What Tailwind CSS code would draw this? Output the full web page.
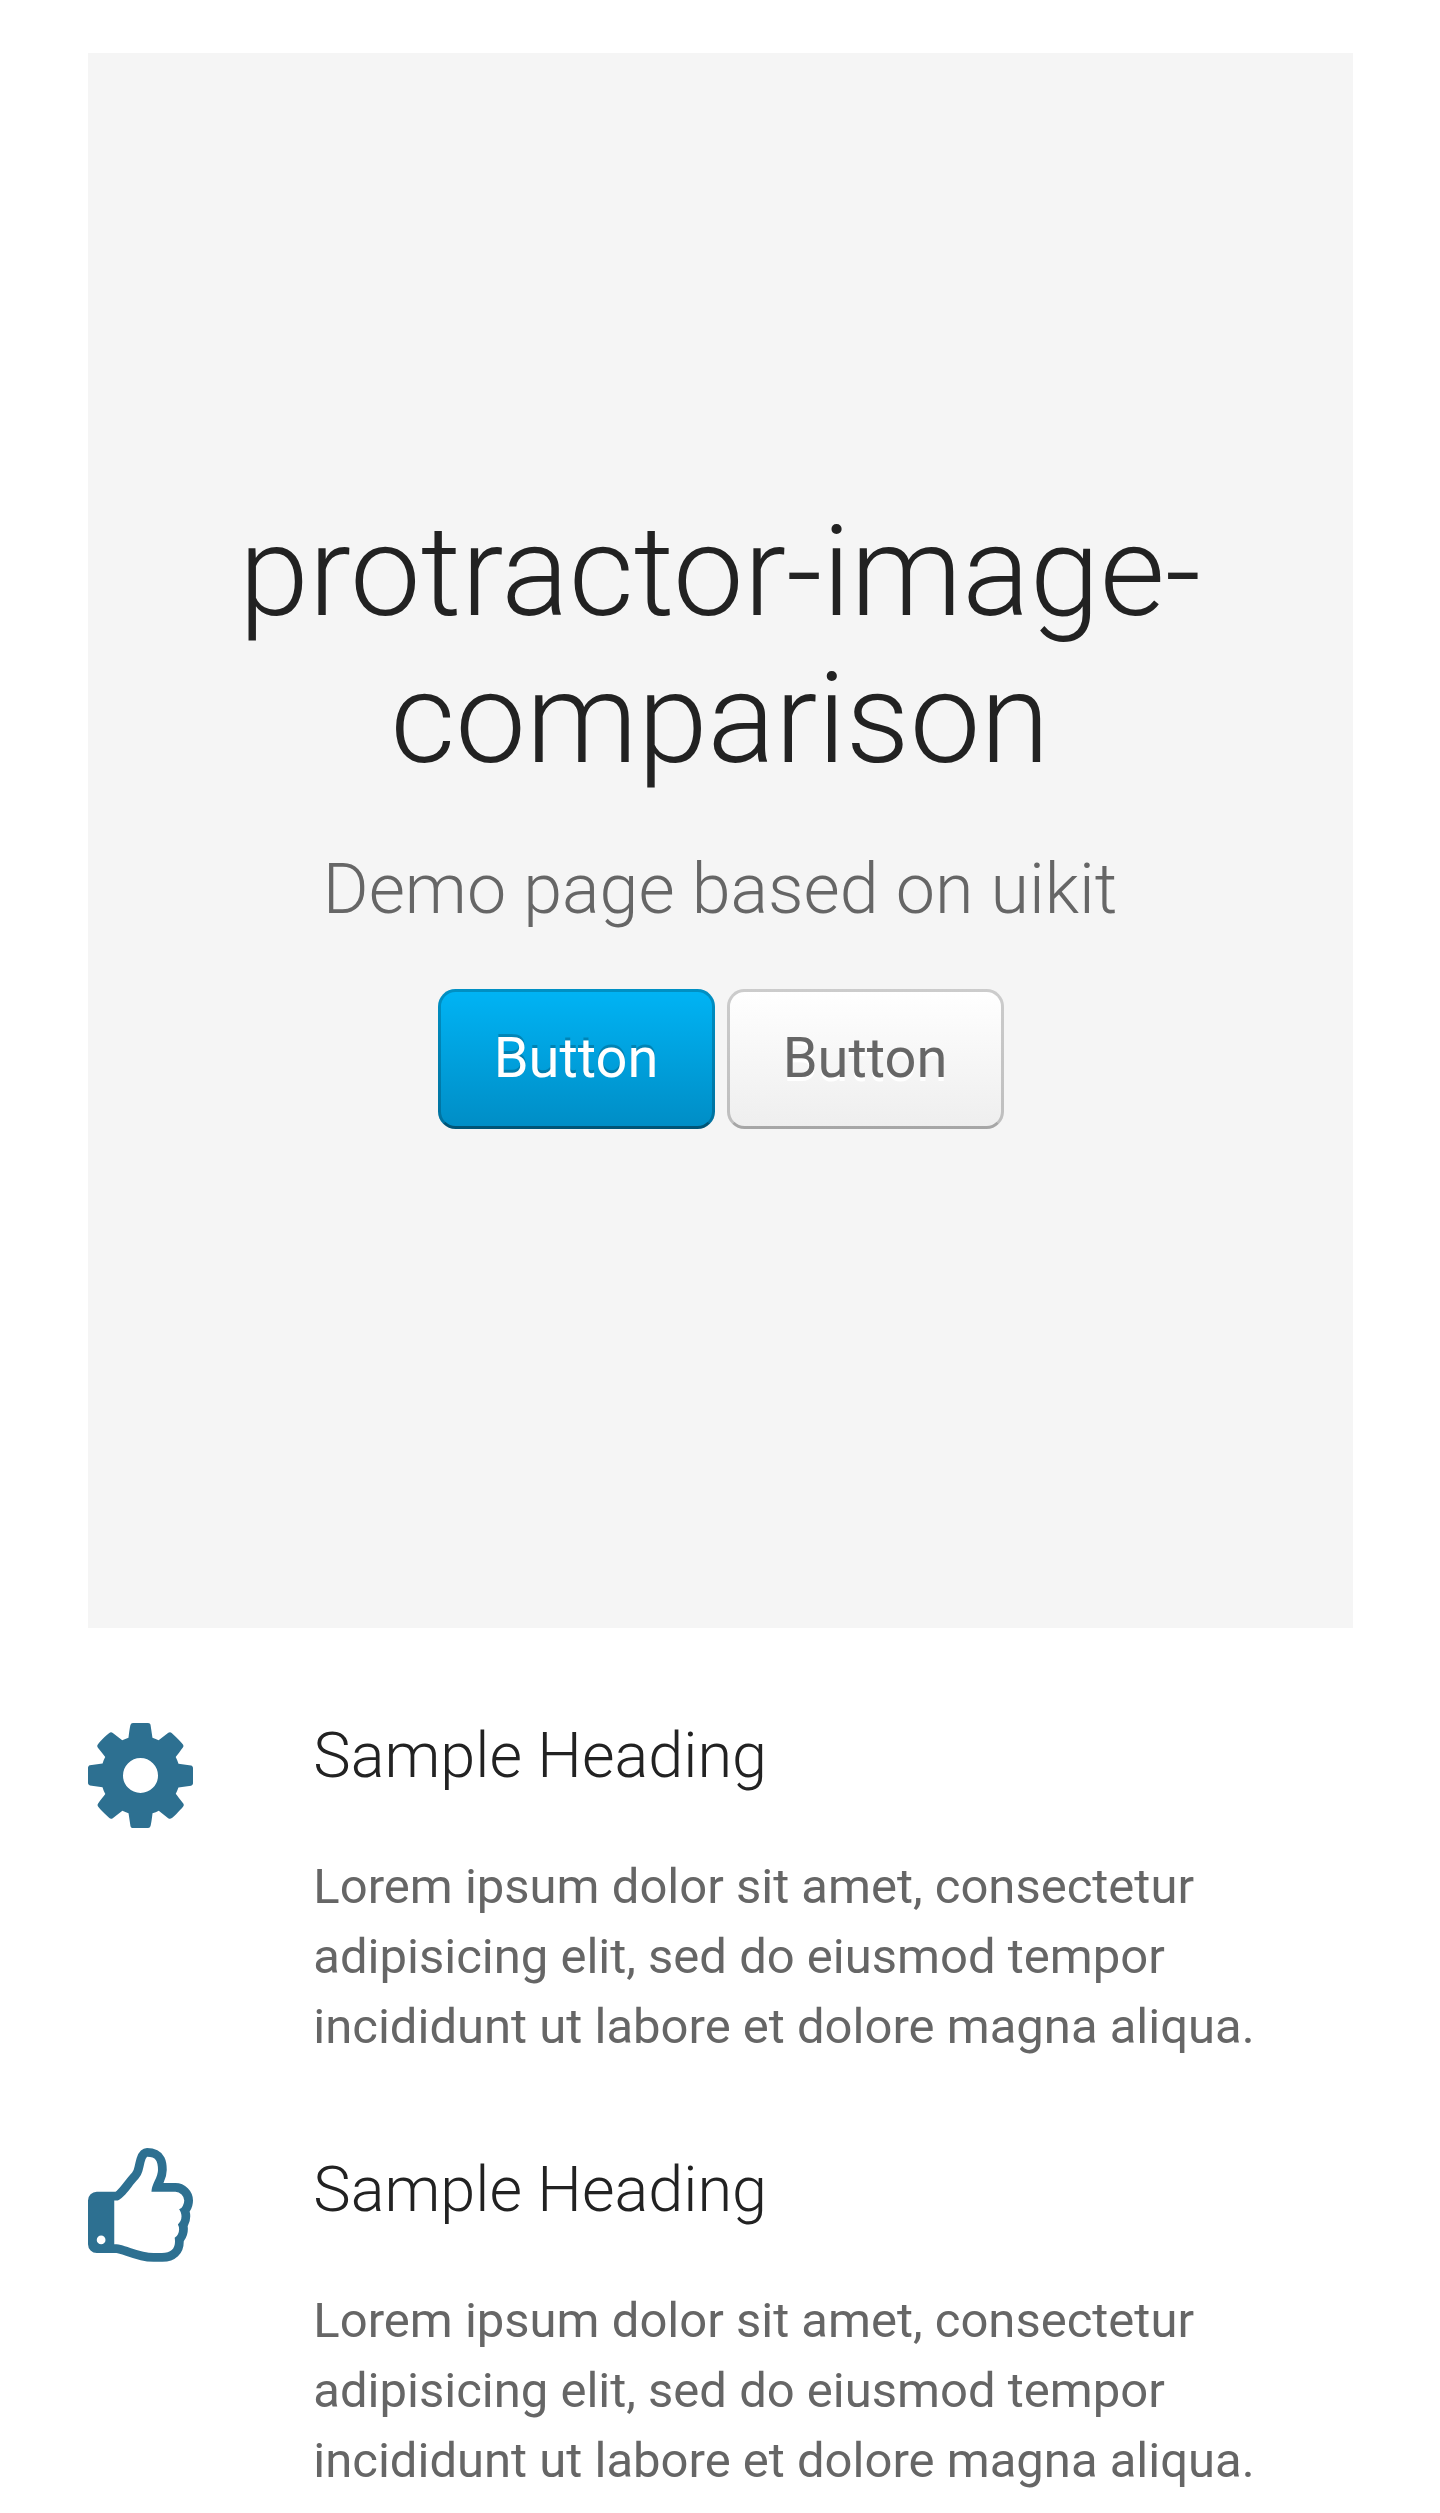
<!DOCTYPE html>
<html lang="en"><head><meta charset="utf-8"><title>protractor-image-comparison</title>
<script src="https://cdn.jsdelivr.net/npm/@tailwindcss/browser@4"></script></head>
<body class="bg-white text-[#666] font-['Roboto',sans-serif] overflow-hidden">
<main class="px-[87.5px] pt-[53px]">
<section class="flex h-[1575px] flex-col items-center bg-[#f5f5f5] pt-[446px] text-center">
<h1 class="text-[126px] leading-[147px] font-light text-[#222]">protractor-image-<br>comparison</h1>
<p class="mt-[44px] text-[70px] leading-[105px] font-light">Demo page based on uikit</p>
<div class="mt-[47px] flex gap-[12px] pl-px">
<a class="h-[140px] w-[277px] rounded-[17.5px] border-[3px] border-black/20 border-b-black/40 bg-linear-to-b from-[#00b4f5] to-[#008dc5] bg-origin-border text-center text-[56px] leading-[132px] text-white [text-shadow:0_-3px_0_rgba(0,0,0,0.2)]">Button</a>
<a class="h-[140px] w-[277px] rounded-[17.5px] border-[3px] border-black/20 border-b-black/30 bg-linear-to-b from-white to-[#eee] bg-origin-border text-center text-[56px] leading-[132px] [text-shadow:0_3.5px_0_#fff]">Button</a>
</div>
</section>
<section class="mt-[89px] flex flex-col gap-[89px]">
<div class="flex">
<svg class="mt-[6px] mr-[120.8px] h-[105px] w-[105px] shrink-0 fill-[#2d7091]" viewBox="128 128 1536 1536"><path d="M1152 896q0-106-75-181t-181-75-181 75-75 181 75 181 181 75 181-75 75-181zm512-109v222q0 12-8 23t-20 13l-185 28q-19 54-39 91 35 50 107 138 10 12 10 25t-9 23q-27 37-99 108t-94 71q-12 0-26-9l-138-108q-44 23-91 38-16 136-29 186-7 28-36 28h-222q-14 0-24.500-8.500t-11.500-21.500l-28-184q-49-16-90-37l-141 107q-10 9-25 9-14 0-25-11-126-114-165-168-7-10-7-23 0-12 8-23 15-21 51-66.500t54-70.500q-27-50-41-99l-183-27q-13-2-21-12.500t-8-23.500v-222q0-12 8-23t19-13l186-28q14-46 39-92-40-57-107-138-10-12-10-24 0-10 9-23 26-36 98.500-107.500t94.500-71.500q13 0 26 10l138 107q44-23 91-38 16-136 29-186 7-28 36-28h222q14 0 24.500 8.500t11.500 21.500l28 184q49 16 90 37l142-107q9-9 24-9 13 0 25 10 129 119 165 170 7 8 7 22 0 12-8 23-15 21-51 66.500t-54 70.500q26 50 41 98l183 28q13 2 21 12.500t8 23.500z"/></svg>
<div>
<h2 class="text-[63px] leading-[77px] font-light text-[#222]">Sample Heading</h2>
<p class="mt-[58px] text-[49px] leading-[70px]">Lorem ipsum dolor sit amet, consectetur<br>adipisicing elit, sed do eiusmod tempor<br>incididunt ut labore et dolore magna aliqua.</p>
</div>
</div>
<div class="flex">
<svg class="-mt-[3px] mr-[120.8px] h-[113.75px] w-[105px] shrink-0 fill-[#2d7091]" viewBox="128 0 1536 1664"><path d="M384 1344q0-26-19-45t-45-19-45 19-19 45 19 45 45 19 45-19 19-45zm1152-576q0-51-39-89.500t-89-38.500h-352q0-58 48-159.500t48-160.500q0-98-32-145t-128-47q-26 26-38 85t-30.500 125.500-59.500 109.500q-22 23-77 91-4 5-23 30t-31.500 41-34.500 42.500-40 44-38.500 35.500-40 27-35.500 9h-32v640h32q13 0 31.500 3t33 6.500 38 11 35 11.500 35.500 12.500 29 10.500q211 73 342 73h121q192 0 192-167 0-26-5-56 30-16 47.500-52.500t17.500-73.500-18-69q53-50 53-119 0-25-10-55.500t-25-47.500q32-1 53.500-47t21.500-81zm128-1q0 89-49 163 9 33 9 69 0 77-38 144 3 21 3 43 0 101-60 178 1 139-85 219.500t-227 80.500h-129q-96 0-189.500-22.500t-216.500-65.500q-116-40-138-40h-288q-53 0-90.500-37.500t-37.500-90.500v-640q0-53 37.500-90.500t90.500-37.500h274q36-24 137-155 58-75 107-128 24-25 35.500-85.500t30.500-126.500 62-108q39-37 90-37 84 0 151 32.500t102 101.500 35 186q0 93-48 192h176q104 0 180 76t76 179z"/></svg>
<div>
<h2 class="text-[63px] leading-[77px] font-light text-[#222]">Sample Heading</h2>
<p class="mt-[58px] text-[49px] leading-[70px]">Lorem ipsum dolor sit amet, consectetur<br>adipisicing elit, sed do eiusmod tempor<br>incididunt ut labore et dolore magna aliqua.</p>
</div>
</div>
</section>
</main>
</body></html>
